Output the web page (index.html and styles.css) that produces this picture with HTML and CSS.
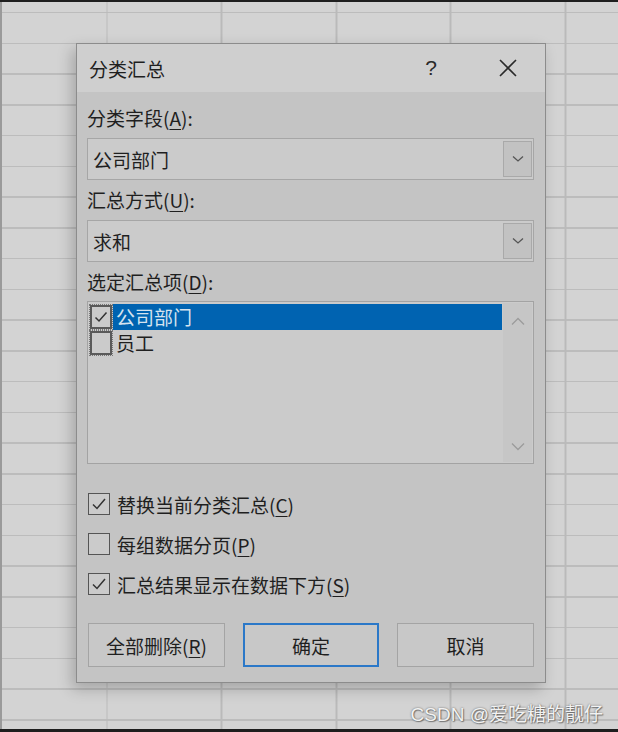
FILE: index.html
```html
<!DOCTYPE html>
<html lang="zh-CN">
<head>
  <meta charset="UTF-8" />
  <meta name="viewport" content="width=device-width, initial-scale=1.0"/>
  <title>分类汇总</title>
  <link rel="stylesheet" href="styles.css">
</head>
<body>

<div class="screen">
  <div class="sheet">
    <div class="dialog">
      <div class="dialog-title">
        <span class="title-text">分类汇总</span>
        <span class="help">?</span>
        <span class="close">
          <svg width="20" height="20" viewBox="0 0 20 20"><path d="M2 2 L18 18 M18 2 L2 18" stroke="#2a2a2a" stroke-width="1.6" fill="none"/></svg>
        </span>
      </div>

      <div class="dialog-body">
        <div class="label">分类字段(<u>A</u>):</div>
        <div class="select">
          <span class="select-value">公司部门</span>
          <span class="select-btn">
            <svg width="12" height="8" viewBox="0 0 12 8"><path d="M1 1.5 L6 6 L11 1.5" stroke="#555" stroke-width="1.3" fill="none"/></svg>
          </span>
        </div>

        <div class="label">汇总方式(<u>U</u>):</div>
        <div class="select">
          <span class="select-value">求和</span>
          <span class="select-btn">
            <svg width="12" height="8" viewBox="0 0 12 8"><path d="M1 1.5 L6 6 L11 1.5" stroke="#555" stroke-width="1.3" fill="none"/></svg>
          </span>
        </div>

        <div class="label">选定汇总项(<u>D</u>):</div>
        <div class="listbox">
          <div class="list-items">
            <div class="list-item">
              <span class="box focus">
                <svg width="16" height="16" viewBox="0 0 16 16"><path d="M2.5 8.5 L6 12 L13.5 3.5" stroke="#333" stroke-width="1.5" fill="none"/></svg>
              </span>
              <span class="item-text selected">公司部门</span>
            </div>
            <div class="list-item">
              <span class="box"></span>
              <span class="item-text">员工</span>
            </div>
          </div>
          <div class="scrollbar">
            <svg width="14" height="9" viewBox="0 0 14 9"><path d="M1 7.5 L7 1.5 L13 7.5" stroke="#9c9c9c" stroke-width="1.4" fill="none"/></svg>
            <svg width="14" height="9" viewBox="0 0 14 9"><path d="M1 1.5 L7 7.5 L13 1.5" stroke="#9c9c9c" stroke-width="1.4" fill="none"/></svg>
          </div>
        </div>

        <div class="options">
          <div class="option">
            <span class="check">
              <svg width="18" height="18" viewBox="0 0 18 18"><path d="M3 9.5 L7 13.5 L15 4" stroke="#333" stroke-width="1.5" fill="none"/></svg>
            </span>
            <span>替换当前分类汇总(<u>C</u>)</span>
          </div>
          <div class="option">
            <span class="check"></span>
            <span>每组数据分页(<u>P</u>)</span>
          </div>
          <div class="option">
            <span class="check">
              <svg width="18" height="18" viewBox="0 0 18 18"><path d="M3 9.5 L7 13.5 L15 4" stroke="#333" stroke-width="1.5" fill="none"/></svg>
            </span>
            <span>汇总结果显示在数据下方(<u>S</u>)</span>
          </div>
        </div>

        <div class="buttons">
          <button class="btn">全部删除(<u>R</u>)</button>
          <button class="btn primary">确定</button>
          <button class="btn">取消</button>
        </div>
      </div>
    </div>
  </div>

  <div class="watermark">CSDN @爱吃糖的靓仔</div>
</div>

</body>
</html>
```

FILE: styles.css
```css
* {
  box-sizing: border-box;
  font-family: "Noto Sans CJK SC", "Noto Sans", sans-serif;
}

body {
  margin: 0;
  background: #1e1e1e;
}

.screen {
  position: relative;
  width: 618px;
  height: 732px;
  overflow: hidden;
  background: #1e1e1e;
  padding-top: 2px;
}

.sheet {
  height: 727px;
  background-color: #d3d3d3;
  background-image:
    linear-gradient(to right, #9a9a9a 0, #9a9a9a 2px, transparent 2px),
    repeating-linear-gradient(to right, transparent 0, transparent 105px, #bababa 105px, #bababa 106.5px, transparent 106.5px, transparent 114.5px),
    repeating-linear-gradient(to bottom, transparent 0, transparent 10px, #bcbcbc 10px, #bcbcbc 11.5px, transparent 11.5px, transparent 30.74px);
  background-position: 0 0, 1.5px 0, 0 0;
  padding-top: 41px;
  padding-left: 76px;
}

.dialog {
  width: 470px;
  height: 640px;
  background: #c4c4c4;
  border: 1px solid #8c8c8c;
  box-shadow: -4px 6px 14px rgba(0, 0, 0, 0.22);
  display: flex;
  flex-direction: column;
  color: #1f1f1f;
}

.dialog-title {
  height: 48px;
  background: #cfcfcf;
  display: flex;
  align-items: center;
  padding-left: 12px;
  font-size: 19px;
}

.title-text {
  flex: 1;
}

.help {
  font-family: "Liberation Sans", sans-serif;
  font-size: 21px;
  width: 20px;
  text-align: center;
  margin-right: 57px;
  color: #2a2a2a;
}

.close {
  display: flex;
  margin-right: 27px;
}

.dialog-body {
  padding: 13px 11px 0 10px;
  display: flex;
  flex-direction: column;
}

.label {
  font-size: 19px;
  line-height: 26px;
  height: 26px;
  margin-bottom: 7px;
}

u {
  text-decoration-thickness: 1px;
  text-underline-offset: 3px;
}

.select {
  height: 42px;
  background: #cbcbcb;
  border: 1px solid #a6a6a6;
  display: flex;
  align-items: center;
  padding: 2px 1px 2px 0;
  margin-bottom: 7px;
}

.select-value {
  flex: 1;
  padding-left: 5px;
  font-size: 19px;
}

.select-btn {
  width: 29px;
  height: 100%;
  background: #c2c2c2;
  border: 1px solid #a9a9a9;
  display: flex;
  align-items: center;
  justify-content: center;
}

.listbox {
  height: 163px;
  background: #cbcbcb;
  border: 1px solid #a3a3a3;
  display: flex;
  margin-top: -1px;
}

.list-items {
  flex: 1;
  padding: 2px 0 0 2px;
}

.list-item {
  height: 26px;
  display: flex;
  align-items: center;
}

.box {
  width: 22px;
  height: 24px;
  border: 2px solid #5a5a5a;
  outline: 1px dotted #777;
  outline-offset: 0;
  display: flex;
  align-items: center;
  justify-content: center;
  background: #cbcbcb;
}

.item-text {
  flex: 1;
  height: 26px;
  line-height: 26px;
  font-size: 19px;
  padding-left: 3px;
  margin-left: 1px;
}

.item-text.selected {
  background: #0063b1;
  color: #d6e3ef;
}

.scrollbar {
  width: 29px;
  background: #c6c6c6;
  display: flex;
  flex-direction: column;
  align-items: center;
  justify-content: space-between;
  padding: 14px 0 11px;
  margin: 1px 1px 1px 1px;
}

.options {
  margin-top: 25px;
  display: flex;
  flex-direction: column;
  gap: 10px;
}

.option {
  height: 30px;
  display: flex;
  align-items: center;
  gap: 7px;
  font-size: 19px;
  padding-left: 1px;
}

.check {
  width: 22px;
  height: 22px;
  border: 1px solid #555;
  background: #cbcbcb;
  display: flex;
  align-items: center;
  justify-content: center;
}

.buttons {
  margin-top: 24px;
  display: flex;
  gap: 18px;
  padding-left: 1px;
}

.btn {
  width: 137px;
  height: 44px;
  background: #c8c8c8;
  border: 1px solid #a4a4a4;
  font-size: 19px;
  color: #1f1f1f;
  padding: 0;
}

.btn.primary {
  border: 2px solid #2b78c8;
  width: 136px;
}

.watermark {
  position: absolute;
  right: 15px;
  bottom: 6px;
  font-family: "Liberation Sans", "Noto Sans CJK SC", sans-serif;
  font-size: 19px;
  color: #f2f2f2;
  text-shadow: 0 0 2px rgba(0, 0, 0, 0.55), 1px 1px 1px rgba(0, 0, 0, 0.35);
}
```
